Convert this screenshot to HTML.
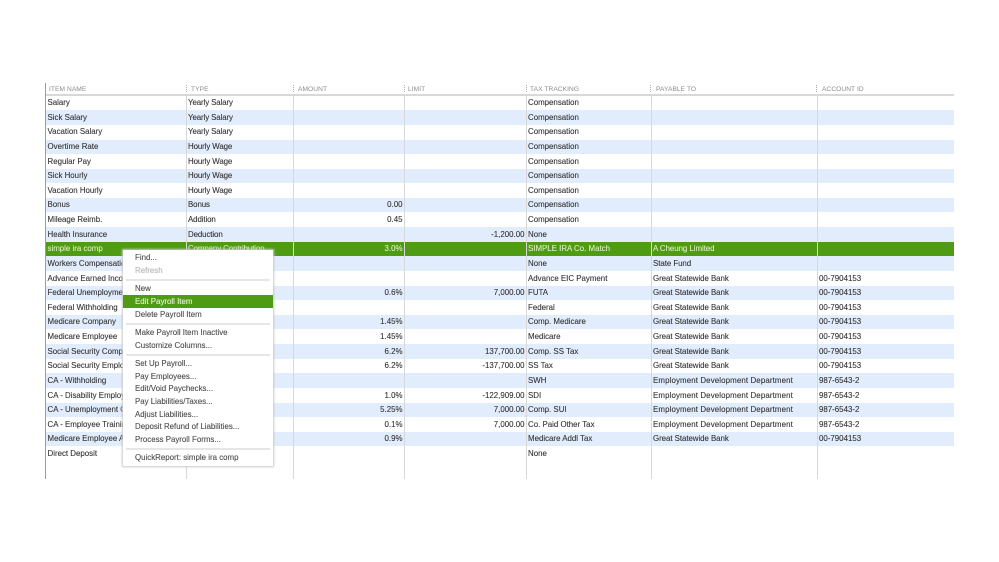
<!DOCTYPE html>
<html>
<head>
<meta charset="utf-8">
<style>
html,body{margin:0;padding:0;background:#fff}
#p{position:relative;width:999px;height:562px;overflow:hidden;background:#fff;font-family:"Liberation Sans",sans-serif;font-size:7.9px;color:#333;filter:blur(.3px);-webkit-text-stroke:.1px currentColor}
.r{position:absolute;left:46px;width:908px;height:14.6px;line-height:14.6px;white-space:nowrap}
.b{background:#e1edfd}
.g{background:#4f9b14;color:#dcecc8}
.r span{position:absolute;top:.5px}
.a{left:1.5px}.t{left:142px;letter-spacing:-.1px}.m{right:551.5px}.l{right:429.5px}.x{left:482px}.y{left:607px;letter-spacing:-.05px}.z{left:773px}
.r span.e{letter-spacing:.12px}
.v{position:absolute;top:83px;height:396px;width:1.4px;background:#d6d8da}
.h{position:absolute;top:85.8px;font-size:6.6px;color:#8b8b8b;line-height:8px;white-space:nowrap;-webkit-text-stroke:0;letter-spacing:.08px}
.d{position:absolute;top:85px;height:7px;border-left:1px dotted #aaa}
#menu{position:absolute;left:122.5px;top:250px;width:150.5px;height:216px;background:#fff;box-shadow:0 0 2px 1px #c8c8c8;color:#4a4a4a}
#menu div{position:absolute;left:0;width:100%;height:13px;line-height:13px;padding-left:12.5px;box-sizing:border-box;white-space:nowrap}
#menu hr{position:absolute;left:3px;right:3px;margin:0;border:0;height:1.5px;background:#e6e6e6}
</style>
</head>
<body>
<div id="p">
<div class="h" style="left:49px">ITEM NAME</div>
<div class="h" style="left:191px">TYPE</div>
<div class="h" style="left:298px">AMOUNT</div>
<div class="h" style="left:408px">LIMIT</div>
<div class="h" style="left:530px">TAX TRACKING</div>
<div class="h" style="left:656px">PAYABLE TO</div>
<div class="h" style="left:822px">ACCOUNT ID</div>
<div class="d" style="left:186px"></div>
<div class="d" style="left:293px"></div>
<div class="d" style="left:404px"></div>
<div class="d" style="left:526px"></div>
<div class="d" style="left:650px"></div>
<div class="d" style="left:816px"></div>
<div style="position:absolute;left:46px;top:94px;width:908px;height:1.5px;background:#d8d8d8"></div>

<div class="r" style="top:95.6px"><span class="a">Salary</span><span class="t">Yearly Salary</span><span class="x">Compensation</span></div>
<div class="r b" style="top:110.2px"><span class="a">Sick Salary</span><span class="t">Yearly Salary</span><span class="x">Compensation</span></div>
<div class="r" style="top:124.8px"><span class="a">Vacation Salary</span><span class="t">Yearly Salary</span><span class="x">Compensation</span></div>
<div class="r b" style="top:139.5px"><span class="a">Overtime Rate</span><span class="t">Hourly Wage</span><span class="x">Compensation</span></div>
<div class="r" style="top:154.1px"><span class="a">Regular Pay</span><span class="t">Hourly Wage</span><span class="x">Compensation</span></div>
<div class="r b" style="top:168.7px"><span class="a">Sick Hourly</span><span class="t">Hourly Wage</span><span class="x">Compensation</span></div>
<div class="r" style="top:183.3px"><span class="a">Vacation Hourly</span><span class="t">Hourly Wage</span><span class="x">Compensation</span></div>
<div class="r b" style="top:197.9px"><span class="a">Bonus</span><span class="t">Bonus</span><span class="m">0.00</span><span class="x">Compensation</span></div>
<div class="r" style="top:212.6px"><span class="a">Mileage Reimb.</span><span class="t">Addition</span><span class="m">0.45</span><span class="x">Compensation</span></div>
<div class="r b" style="top:227.2px"><span class="a">Health Insurance</span><span class="t">Deduction</span><span class="l">-1,200.00</span><span class="x">None</span></div>
<div class="r g" style="top:241.8px"><span class="a">simple ira comp</span><span class="t">Company Contribution</span><span class="m">3.0%</span><span class="x">SIMPLE IRA Co. Match</span><span class="y">A Cheung Limited</span></div>
<div class="r b" style="top:256.4px"><span class="a">Workers Compensation</span><span class="x">None</span><span class="y">State Fund</span></div>
<div class="r" style="top:271px"><span class="a">Advance Earned Income</span><span class="x">Advance EIC Payment</span><span class="y">Great Statewide Bank</span><span class="z">00-7904153</span></div>
<div class="r b" style="top:285.7px"><span class="a">Federal Unemployment</span><span class="m">0.6%</span><span class="l">7,000.00</span><span class="x">FUTA</span><span class="y">Great Statewide Bank</span><span class="z">00-7904153</span></div>
<div class="r" style="top:300.3px"><span class="a">Federal Withholding</span><span class="x">Federal</span><span class="y">Great Statewide Bank</span><span class="z">00-7904153</span></div>
<div class="r b" style="top:314.9px"><span class="a">Medicare Company</span><span class="m">1.45%</span><span class="x">Comp. Medicare</span><span class="y">Great Statewide Bank</span><span class="z">00-7904153</span></div>
<div class="r" style="top:329.5px"><span class="a">Medicare Employee</span><span class="m">1.45%</span><span class="x">Medicare</span><span class="y">Great Statewide Bank</span><span class="z">00-7904153</span></div>
<div class="r b" style="top:344.1px"><span class="a">Social Security Company</span><span class="m">6.2%</span><span class="l">137,700.00</span><span class="x">Comp. SS Tax</span><span class="y">Great Statewide Bank</span><span class="z">00-7904153</span></div>
<div class="r" style="top:358.8px"><span class="a">Social Security Employee</span><span class="m">6.2%</span><span class="l">-137,700.00</span><span class="x">SS Tax</span><span class="y">Great Statewide Bank</span><span class="z">00-7904153</span></div>
<div class="r b" style="top:373.4px"><span class="a">CA - Withholding</span><span class="x">SWH</span><span class="y e">Employment Development Department</span><span class="z">987-6543-2</span></div>
<div class="r" style="top:388px"><span class="a">CA - Disability Employee</span><span class="m">1.0%</span><span class="l">-122,909.00</span><span class="x">SDI</span><span class="y e">Employment Development Department</span><span class="z">987-6543-2</span></div>
<div class="r b" style="top:402.6px"><span class="a">CA - Unemployment Company</span><span class="m">5.25%</span><span class="l">7,000.00</span><span class="x">Comp. SUI</span><span class="y e">Employment Development Department</span><span class="z">987-6543-2</span></div>
<div class="r" style="top:417.2px"><span class="a">CA - Employee Training Tax</span><span class="m">0.1%</span><span class="l">7,000.00</span><span class="x">Co. Paid Other Tax</span><span class="y e">Employment Development Department</span><span class="z">987-6543-2</span></div>
<div class="r b" style="top:431.9px"><span class="a">Medicare Employee Addl Tax</span><span class="m">0.9%</span><span class="x">Medicare Addl Tax</span><span class="y">Great Statewide Bank</span><span class="z">00-7904153</span></div>
<div class="r" style="top:446.5px"><span class="a">Direct Deposit</span><span class="x">None</span></div>

<div class="v" style="left:44.5px;width:1.5px;background:#8d9fb2"></div>
<div class="v" style="left:186px;top:95px;height:384px"></div>
<div class="v" style="left:293px;top:95px;height:384px"></div>
<div class="v" style="left:404px;top:95px;height:384px"></div>
<div class="v" style="left:526px;top:95px;height:384px"></div>
<div class="v" style="left:651px;top:95px;height:384px"></div>
<div class="v" style="left:817px;top:95px;height:384px"></div>

<div id="menu">
<div style="top:1.2px">Find...</div>
<div style="top:13.8px;color:#b5b5b5">Refresh</div>
<hr style="top:29.3px">
<div style="top:32px">New</div>
<div style="top:45px;background:#4f9b14;color:#e6f1d8">Edit Payroll Item</div>
<div style="top:57.7px">Delete Payroll Item</div>
<hr style="top:73.3px">
<div style="top:76px">Make Payroll Item Inactive</div>
<div style="top:88.7px">Customize Columns...</div>
<hr style="top:104.3px">
<div style="top:107px">Set Up Payroll...</div>
<div style="top:119.7px">Pay Employees...</div>
<div style="top:132.3px">Edit/Void Paychecks...</div>
<div style="top:145px">Pay Liabilities/Taxes...</div>
<div style="top:157.7px">Adjust Liabilities...</div>
<div style="top:170.3px">Deposit Refund of Liabilities...</div>
<div style="top:183px">Process Payroll Forms...</div>
<hr style="top:198.3px">
<div style="top:201.3px">QuickReport: simple ira comp</div>
</div>
</div>
</body>
</html>
